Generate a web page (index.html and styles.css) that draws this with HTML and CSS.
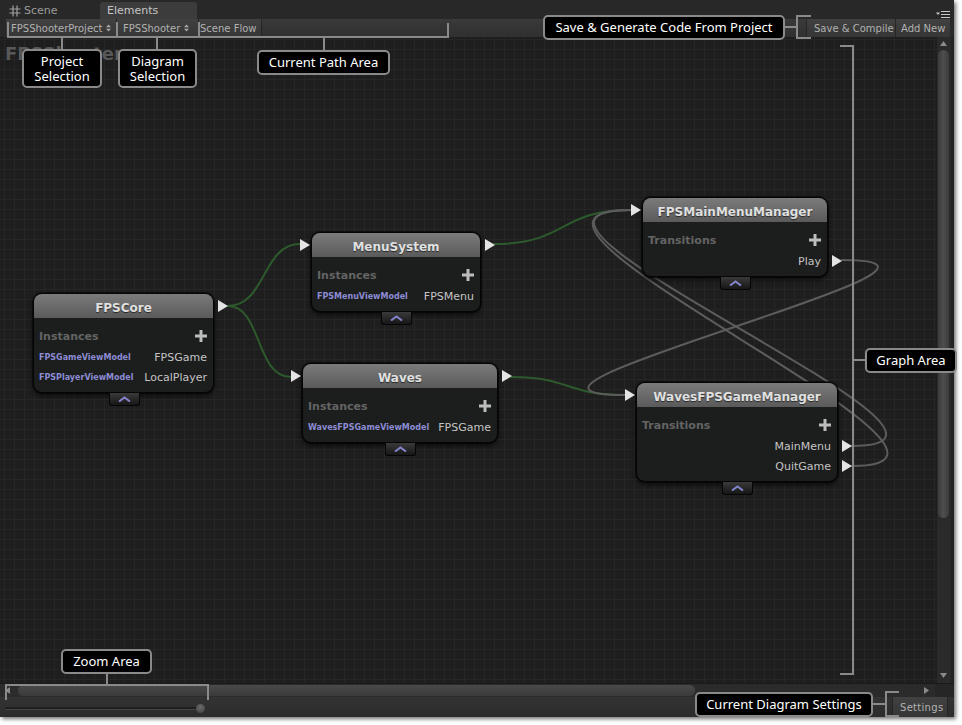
FILE: index.html
```html
<!DOCTYPE html>
<html>
<head>
<meta charset="utf-8">
<title>uFrame Elements</title>
<link rel="stylesheet" href="styles.css">
</head>
<body>
<div class="window">
  <div class="tabbar">
    <div class="tab tab-scene">
      <svg class="hash" width="12" height="12" viewBox="0 0 12 12"><path d="M4 0.5V11.5M8 0.5V11.5M0.5 4H11.5M0.5 8H11.5" stroke="#a0a0a0" stroke-width="1.2" fill="none"/></svg>
      <span>Scene</span>
    </div>
    <div class="tab tab-active">Elements</div>
    <div class="tab-fill"></div>
    <svg class="panel-menu" width="14" height="7" viewBox="0 0 14 7"><path d="M0 1.5H4L2 4Z" fill="#c8c8c8"/><path d="M5 0.5H14M5 3.5H14M5 6.5H14" stroke="#c8c8c8" stroke-width="1.2"/></svg>
  </div>

  <div class="toolbar">
    <div class="tb-btn tb-project">FPSShooterProject <svg class="updown" width="5" height="8" viewBox="0 0 5 8"><path d="M0 3.2L2.5 0.5L5 3.2ZM0 4.8L2.5 7.5L5 4.8Z" fill="#a8a8a8"/></svg></div>
    <div class="tb-btn tb-diagram">FPSShooter <svg class="updown" width="5" height="8" viewBox="0 0 5 8"><path d="M0 3.2L2.5 0.5L5 3.2ZM0 4.8L2.5 7.5L5 4.8Z" fill="#a8a8a8"/></svg></div>
    <div class="tb-btn tb-crumb">Scene Flow</div>
    <div class="tb-path"></div>
    <div class="tb-btn tb-save">Save &amp; Compile</div>
    <div class="tb-btn tb-add">Add New</div>
  </div>

  <div class="main">
    <div class="graph-row">
      <div class="canvas">
        <div class="graph-title">FPSShooter</div>
        <svg class="wires" width="937" height="646" viewBox="0 37 937 646">
          <g fill="none" stroke-width="2" stroke-linecap="round">
            <path class="wire-green" d="M228,306 C266,306 262,244 300,244"/>
            <path class="wire-green" d="M228,306 C262,306 255,377 291,377"/>
            <path class="wire-green" d="M494,244 C568,244 558,210 631,210"/>
            <path class="wire-green" d="M511,377 C570,377 566,395 625,395"/>
            <path class="wire-grey" d="M842,260 C1025,260 440,395 625,395"/>
            <path class="wire-grey" d="M852,446 C1030,446 445,210 631,210"/>
            <path class="wire-grey" d="M852,466 C1035,466 440,210 631,210"/>
          </g>
        </svg>

        <div class="node" style="left:33px;top:256px;width:181px">
          <div class="node-head">FPSCore</div>
          <div class="node-body">
            <div class="section"><span>Instances</span><svg class="plus" width="12" height="12" viewBox="0 0 12 12"><path d="M6 0V12M0 6H12" stroke="#bdbdbd" stroke-width="3"/></svg></div>
            <div class="row"><span class="vm">FPSGameViewModel</span><span>FPSGame</span></div>
            <div class="row"><span class="vm">FPSPlayerViewModel</span><span>LocalPlayer</span></div>
          </div>
          <span class="port port-out"></span>
          <div class="collapse"><svg width="13" height="6" viewBox="0 0 13 6"><path d="M1 5.5L6.5 1.5L12 5.5" stroke="#8484cc" stroke-width="2" fill="none"/></svg></div>
        </div>

        <div class="node" style="left:311px;top:195px;width:170px">
          <div class="node-head">MenuSystem</div>
          <div class="node-body">
            <div class="section"><span>Instances</span><svg class="plus" width="12" height="12" viewBox="0 0 12 12"><path d="M6 0V12M0 6H12" stroke="#bdbdbd" stroke-width="3"/></svg></div>
            <div class="row"><span class="vm">FPSMenuViewModel</span><span>FPSMenu</span></div>
          </div>
          <span class="port port-in"></span>
          <span class="port port-out"></span>
          <div class="collapse"><svg width="13" height="6" viewBox="0 0 13 6"><path d="M1 5.5L6.5 1.5L12 5.5" stroke="#8484cc" stroke-width="2" fill="none"/></svg></div>
        </div>

        <div class="node" style="left:302px;top:326px;width:196px">
          <div class="node-head">Waves</div>
          <div class="node-body">
            <div class="section"><span>Instances</span><svg class="plus" width="12" height="12" viewBox="0 0 12 12"><path d="M6 0V12M0 6H12" stroke="#bdbdbd" stroke-width="3"/></svg></div>
            <div class="row"><span class="vm">WavesFPSGameViewModel</span><span>FPSGame</span></div>
          </div>
          <span class="port port-in"></span>
          <span class="port port-out"></span>
          <div class="collapse"><svg width="13" height="6" viewBox="0 0 13 6"><path d="M1 5.5L6.5 1.5L12 5.5" stroke="#8484cc" stroke-width="2" fill="none"/></svg></div>
        </div>

        <div class="node" style="left:642px;top:160px;width:186px">
          <div class="node-head">FPSMainMenuManager</div>
          <div class="node-body">
            <div class="section"><span>Transitions</span><svg class="plus" width="12" height="12" viewBox="0 0 12 12"><path d="M6 0V12M0 6H12" stroke="#bdbdbd" stroke-width="3"/></svg></div>
            <div class="row row-right"><span>Play</span><span class="port port-row"></span></div>
          </div>
          <span class="port port-in"></span>
          <div class="collapse"><svg width="13" height="6" viewBox="0 0 13 6"><path d="M1 5.5L6.5 1.5L12 5.5" stroke="#8484cc" stroke-width="2" fill="none"/></svg></div>
        </div>

        <div class="node" style="left:636px;top:345px;width:202px">
          <div class="node-head">WavesFPSGameManager</div>
          <div class="node-body">
            <div class="section"><span>Transitions</span><svg class="plus" width="12" height="12" viewBox="0 0 12 12"><path d="M6 0V12M0 6H12" stroke="#bdbdbd" stroke-width="3"/></svg></div>
            <div class="row row-right"><span>MainMenu</span><span class="port port-row"></span></div>
            <div class="row row-right"><span>QuitGame</span><span class="port port-row"></span></div>
          </div>
          <span class="port port-in"></span>
          <div class="collapse"><svg width="13" height="6" viewBox="0 0 13 6"><path d="M1 5.5L6.5 1.5L12 5.5" stroke="#8484cc" stroke-width="2" fill="none"/></svg></div>
        </div>
      </div>
      <div class="vscroll">
        <svg class="arrow-up" width="7" height="5" viewBox="0 0 7 5"><path d="M0 5L3.5 0L7 5Z" fill="#8a8a8a"/></svg>
        <div class="vthumb"></div>
        <div class="vgap"></div>
        <svg class="arrow-down" width="7" height="5" viewBox="0 0 7 5"><path d="M0 0L3.5 5L7 0Z" fill="#8a8a8a"/></svg>
      </div>
    </div>
    <div class="hscroll">
      <svg class="arrow-left" width="5" height="7" viewBox="0 0 5 7"><path d="M5 0L0 3.5L5 7Z" fill="#8a8a8a"/></svg>
      <div class="hthumb"></div>
      <div class="hgap"></div>
      <svg class="arrow-right" width="5" height="7" viewBox="0 0 5 7"><path d="M0 0L5 3.5L0 7Z" fill="#8a8a8a"/></svg>
      <div class="corner"></div>
    </div>
  </div>

  <div class="bottombar">
    <div class="zoom-slider"><div class="zoom-track"></div><div class="zoom-knob"></div></div>
    <div class="bb-fill"></div>
    <div class="tb-btn bb-settings">Settings</div>
  </div>
</div>

<div class="annotations">
  <svg class="brackets" width="962" height="725" viewBox="0 0 962 725">
    <g fill="none" stroke="#8a8a8a" stroke-width="2">
      <path d="M8,22V37H448V23"/>
      <path d="M117,22V37M199,22V37"/>
      <path d="M62,37V49M157,37V49M324,37V50"/>
      <path d="M811,16H797V38H811M785,27H797"/>
      <path d="M840,46H853V674H840M853,360H866"/>
      <path d="M6,700V685H208V700M107,674V685"/>
      <path d="M899,692H886V716H899M873,704H886"/>
    </g>
  </svg>
  <div class="callout c-project">Project<br>Selection</div>
  <div class="callout c-diagram">Diagram<br>Selection</div>
  <div class="callout c-path">Current Path Area</div>
  <div class="callout c-save">Save &amp; Generate Code From Project</div>
  <div class="callout c-graph">Graph Area</div>
  <div class="callout c-zoom">Zoom Area</div>
  <div class="callout c-settings">Current Diagram Settings</div>
</div>
</body>
</html>
```

FILE: styles.css
```css
* { box-sizing: border-box; }

html, body {
  margin: 0;
  padding: 0;
  background: #ffffff;
}

body {
  width: 962px;
  height: 725px;
  position: relative;
  overflow: hidden;
  font-family: "DejaVu Sans", Verdana, sans-serif;
}

.window {
  width: 954px;
  height: 717px;
  background: #222222;
  display: flex;
  flex-direction: column;
  box-shadow: 2px 2px 4px rgba(0, 0, 0, 0.55);
}

/* ---------- tab bar ---------- */
.tabbar {
  height: 19px;
  background: #282828;
  display: flex;
  align-items: flex-end;
}

.tab {
  height: 17px;
  display: flex;
  align-items: center;
  font-size: 11px;
}

.tab-scene {
  width: 100px;
  padding-left: 9px;
  color: #9c9c9c;
  gap: 3px;
}

.tab-active {
  width: 97px;
  padding-left: 7px;
  background: #3c3c3c;
  color: #c6c6c6;
  border-radius: 3px 3px 0 0;
}

.tab-fill { flex: 1; }

.panel-menu {
  align-self: flex-start;
  margin: 11px 4px 0 0;
}

/* ---------- toolbar ---------- */
.toolbar {
  height: 18px;
  display: flex;
  padding: 0 4px 0 6px;
  background: #282828;
}

.tb-btn {
  height: 18px;
  display: flex;
  align-items: center;
  gap: 4px;
  font-size: 10px;
  color: #b2b2b2;
  background: linear-gradient(#414141, #363636);
  border-right: 1px solid #252525;
  white-space: nowrap;
}

.tb-project { width: 111px; padding-left: 5px; }
.tb-diagram { width: 82px; padding-left: 6px; }
.tb-crumb { width: 63px; padding-left: 1px; }

.tb-path {
  flex: 1;
  background: linear-gradient(#3a3a3a, #303030);
}

.tb-save {
  width: 90px;
  padding-left: 7px;
  border-left: 1px solid #252525;
}

.tb-add {
  width: 54px;
  padding-left: 5px;
  border-right: none;
}

/* ---------- graph ---------- */
.main {
  flex: 1;
  display: flex;
  flex-direction: column;
}

.graph-row {
  flex: 1;
  display: flex;
}

.canvas {
  flex: 1;
  position: relative;
  overflow: hidden;
  background-color: #1e1e1e;
  background-image:
    linear-gradient(90deg, #262626 1px, transparent 1px),
    linear-gradient(0deg, #262626 1px, transparent 1px);
  background-size: 10px 10px;
  background-position: 4px 3px;
}

.graph-title {
  position: absolute;
  left: 5px;
  top: 6px;
  font-size: 18px;
  font-weight: bold;
  color: #585858;
}

.wires {
  position: absolute;
  left: 0;
  top: 0;
}

.wire-green { stroke: #2d5a2d; }
.wire-grey { stroke: #5c5c5c; }

.node {
  position: absolute;
  background: #1c1d1d;
  border: 1px solid #050505;
  border-radius: 9px;
  box-shadow: 0 0 0 1px rgba(0, 0, 0, 0.5), 0 3px 5px rgba(0, 0, 0, 0.6);
}

.node-head {
  height: 24px;
  padding-top: 3px;
  border-radius: 8px 8px 0 0;
  background: linear-gradient(#7b7b7b, #5a5a5a);
  color: #e0e0e0;
  font-size: 12px;
  font-weight: bold;
  display: flex;
  align-items: center;
  justify-content: center;
  text-shadow: 0 1px 1px rgba(0, 0, 0, 0.6);
}

.node-body {
  padding: 7px 6px 5px 5px;
}

.section {
  height: 22px;
  display: flex;
  align-items: center;
  justify-content: space-between;
  font-size: 11px;
  font-weight: bold;
  color: #646464;
}

.row {
  height: 20px;
  display: flex;
  align-items: center;
  justify-content: space-between;
  font-size: 11px;
  color: #c4c4c4;
  position: relative;
}

.row-right { justify-content: flex-end; }

.vm {
  font-size: 8px;
  font-weight: bold;
  color: #8c8cd4;
}

.port {
  position: absolute;
  width: 0;
  height: 0;
  border-left: 10px solid #e4e4e4;
  border-top: 6px solid transparent;
  border-bottom: 6px solid transparent;
}

.port-in { left: -12px; top: 6px; }
.port-out { right: -15px; top: 6px; }
.port-row { right: -21px; top: 4px; }

.collapse {
  position: absolute;
  left: 50%;
  bottom: -14px;
  width: 31px;
  height: 13px;
  margin-left: -15px;
  background: linear-gradient(#3a3a3a, #161616);
  border: 1px solid #050505;
  border-top: none;
  border-radius: 0 0 3px 3px;
  display: flex;
  justify-content: center;
  padding-top: 3px;
}

/* ---------- scrollbars ---------- */
.vscroll {
  width: 17px;
  display: flex;
  flex-direction: column;
  align-items: center;
  padding: 4px 3px 5px 1px;
  background: #2a2a2a;
  border-right: 3px solid #232323;
}

.arrow-up { margin: 0 0 4px 0; }

.vthumb {
  width: 11px;
  height: 468px;
  border-radius: 6px;
  background: linear-gradient(90deg, #3c3c3c, #4e4e4e 50%, #3c3c3c);
}

.vgap { flex: 1; }

.hscroll {
  height: 14px;
  display: flex;
  align-items: center;
  padding-left: 5px;
  background: #2b2b2b;
  border-top: 1px solid #1a1a1a;
}

.arrow-left { margin-right: 8px; }

.hthumb {
  width: 677px;
  height: 11px;
  border-radius: 6px;
  background: linear-gradient(#4a4a4a, #3a3a3a);
}

.hgap { flex: 1; }

.arrow-right { margin-right: 6px; }

.corner {
  width: 19px;
  height: 13px;
  background: #262626;
}

/* ---------- bottom bar ---------- */
.bottombar {
  height: 20px;
  display: flex;
  align-items: center;
  background: linear-gradient(#333333, #2c2c2c);
  padding-right: 6px;
}

.zoom-slider {
  width: 210px;
  height: 20px;
  position: relative;
}

.zoom-track {
  position: absolute;
  left: 5px;
  top: 10px;
  width: 196px;
  height: 3px;
  border-radius: 2px;
  background: #1f1f1f;
  border-bottom: 1px solid #444;
}

.zoom-knob {
  position: absolute;
  left: 196px;
  top: 7px;
  width: 9px;
  height: 9px;
  border-radius: 50%;
  background: radial-gradient(circle at 50% 35%, #6a6a6a, #3f3f3f);
}

.bb-fill { flex: 1; }

.bb-settings {
  width: 56px;
  height: 20px;
  padding-left: 7px;
  border-left: 1px solid #252525;
  letter-spacing: 0.3px;
}

/* ---------- annotations ---------- */
.annotations {
  position: absolute;
  left: 0;
  top: 0;
  width: 962px;
  height: 725px;
  pointer-events: none;
}

.brackets {
  position: absolute;
  left: 0;
  top: 0;
}

.callout {
  position: absolute;
  background: #000000;
  border: 2px solid #8a8a8a;
  border-radius: 5px;
  color: #ffffff;
  font-family: "Noto Sans", "Open Sans", sans-serif;
  font-size: 13px;
  line-height: 15px;
  display: flex;
  align-items: center;
  justify-content: center;
  text-align: center;
  white-space: nowrap;
}

.c-project { left: 22px; top: 49px; width: 80px; height: 39px; }
.c-diagram { left: 118px; top: 49px; width: 79px; height: 39px; }
.c-path { left: 257px; top: 50px; width: 133px; height: 25px; }
.c-save { left: 543px; top: 15px; width: 242px; height: 25px; }
.c-graph { left: 865px; top: 348px; width: 92px; height: 25px; }
.c-zoom { left: 61px; top: 649px; width: 91px; height: 25px; }
.c-settings { left: 695px; top: 692px; width: 178px; height: 25px; }
```
